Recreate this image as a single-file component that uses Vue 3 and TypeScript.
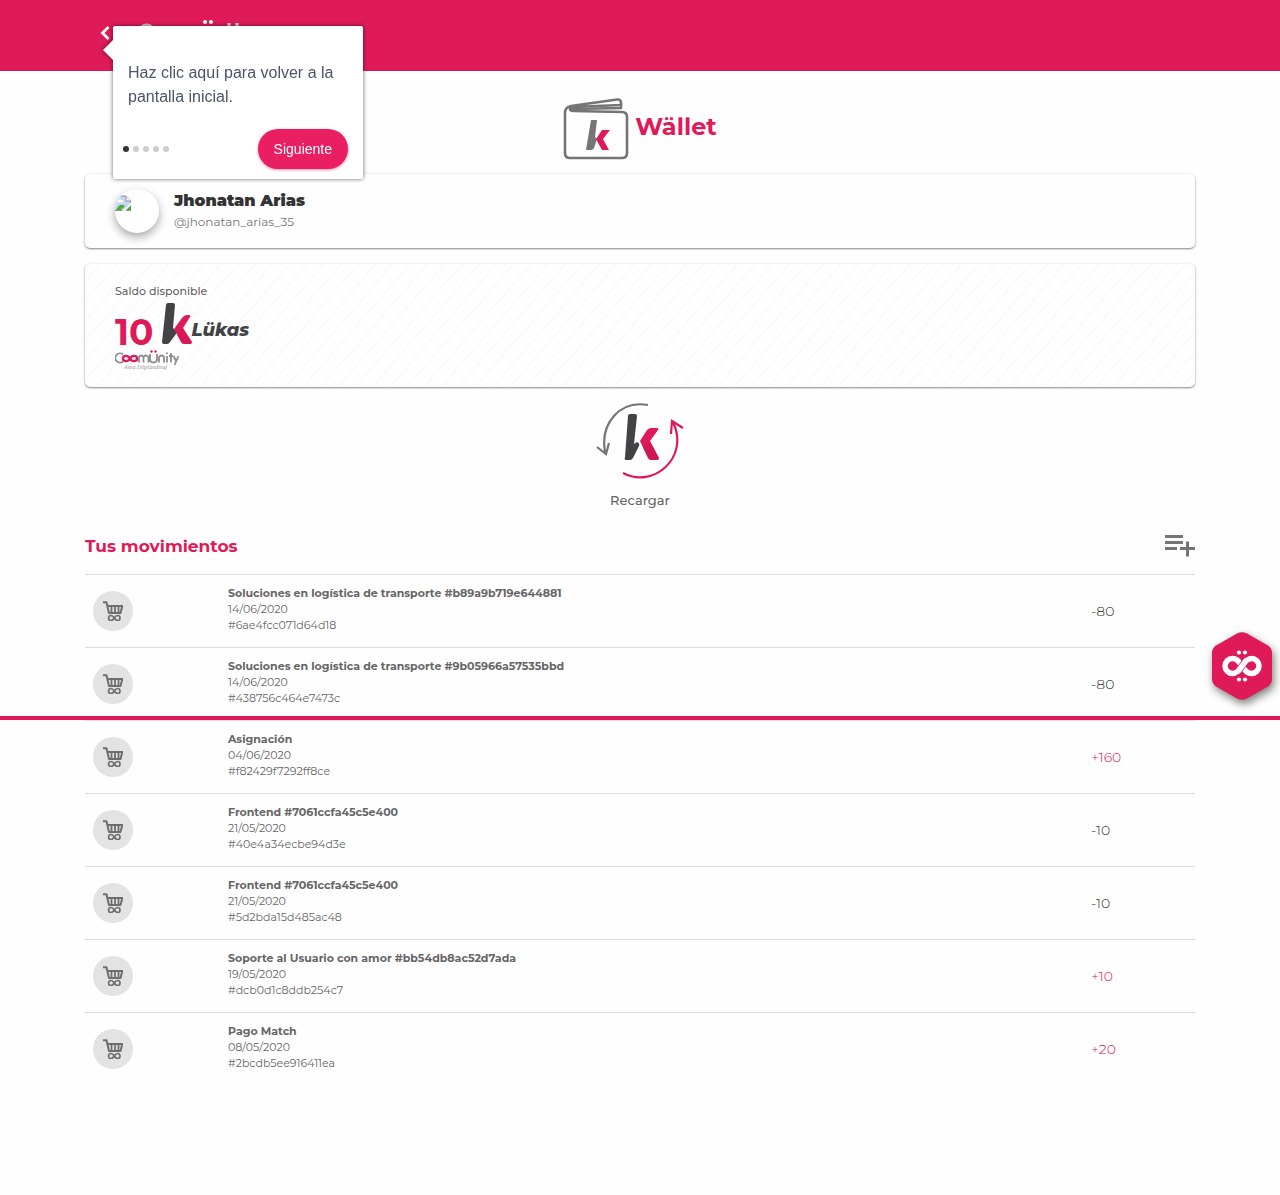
<script setup lang="ts">
import { ref } from 'vue'

interface Movement {
  title: string
  date: string
  code: string
  amount: number
}

const movements: Movement[] = [
  { title: 'Soluciones en logística de transporte #b89a9b719e644881', date: '14/06/2020', code: '#6ae4fcc071d64d18', amount: -80 },
  { title: 'Soluciones en logística de transporte #9b05966a57535bbd', date: '14/06/2020', code: '#438756c464e7473c', amount: -80 },
  { title: 'Asignación', date: '04/06/2020', code: '#f82429f7292ff8ce', amount: 160 },
  { title: 'Frontend #7061ccfa45c5e400', date: '21/05/2020', code: '#40e4a34ecbe94d3e', amount: -10 },
  { title: 'Frontend #7061ccfa45c5e400', date: '21/05/2020', code: '#5d2bda15d485ac48', amount: -10 },
  { title: 'Soporte al Usuario con amor #bb54db8ac52d7ada', date: '19/05/2020', code: '#dcb0d1c8ddb254c7', amount: 10 },
  { title: 'Pago Match', date: '08/05/2020', code: '#2bcdb5ee916411ea', amount: 20 },
]

const steps = 5
const step = ref(0)

const next = (): void => {
  step.value = (step.value + 1) % steps
}

const signed = (n: number): string => (n > 0 ? `+${n}` : `${n}`)
</script>

<template>
  <div class="page">
    <header class="topbar">
      <div class="container topbar-inner">
        <a href="#" class="back" aria-label="Volver">
          <svg width="10" height="16" viewBox="0 0 10 16"><path d="M8.500 2 2.500 8l6 6" fill="none" stroke="#fff" stroke-width="2.800" /></svg>
        </a>
        <svg class="brand" width="110" height="32" viewBox="0 0 110 32" aria-hidden="true">
          <path d="M18 10a8 8 0 1 0 0 12" fill="none" stroke="#d9c3ca" stroke-width="3" />
          <g fill="none" stroke="#fff" stroke-width="3">
            <circle cx="27" cy="17" r="6" /><circle cx="40" cy="17" r="6" />
            <path d="M50 24V14q4-5 8 0v10m0-10q4-5 8 0v10M70 10v9q4 8 11 0v-9M86 24V10" />
          </g>
          <path d="M95 6v18M103 6v18" fill="none" stroke="#e0c9d0" stroke-width="3.500" />
          <g fill="#fff"><circle cx="71" cy="5" r="2" /><circle cx="77" cy="5" r="2" /></g>
        </svg>

        <div class="tour" role="dialog" aria-label="Guía">
          <p class="tour-text">Haz clic aquí para volver a la pantalla inicial.</p>
          <div class="tour-foot">
            <div class="dots">
              <span v-for="n in steps" :key="n" class="dot" :class="{ on: n - 1 === step }"></span>
            </div>
            <button type="button" class="next" @click="next">Siguiente</button>
          </div>
        </div>
      </div>
    </header>

    <main class="container main">
      <h1 class="wallet">
        <svg width="66" height="62" viewBox="0 0 66 62" aria-hidden="true">
          <g fill="none" stroke="#757575" stroke-width="2.600" stroke-linejoin="round" stroke-linecap="round">
            <path d="M2 14v41q0 5 5 5h52q5 0 5-5V19q0-5-5-5L10 13q-3 0-3-2t3-2l48-2v-2q0-4-4-3.500L8 8q-6 1-6 7" />
            <path d="M8 11 58 10V6" />
          </g>
          <path d="M28 22h6l-2 17 2 2-3 9q-1 2-3 2h-5z" fill="#757575" />
          <path d="M39 32h8l-7 9 6 11h-7l-6-11z" fill="#de1a59" />
        </svg>
        <span>Wället</span>
      </h1>

      <section class="card profile">
        <div class="avatar">
          <svg width="16" height="16" viewBox="0 0 16 16" aria-hidden="true">
            <path d="M0 1h11l5 5v2L8 16H0z" fill="#c3d7f7" />
            <path d="M4 1h7l5 5v2" fill="none" stroke="#8f8f8f" />
            <path d="M11 1v5h5" fill="#fff" stroke="#8f8f8f" />
            <ellipse cx="5" cy="6" rx="3" ry="1.500" fill="#fff" />
            <path d="M1 15q4-8 9-4l-4 4zM11 15l5-5v5z" fill="#55a832" />
            <path d="M0 15.500h7M11 15.500h5" stroke="#8f8f8f" />
          </svg>
        </div>
        <div>
          <div class="name">Jhonatan Arias</div>
          <div class="handle">@jhonatan_arias_35</div>
        </div>
      </section>

      <section class="card balance">
        <div class="label">Saldo disponible</div>
        <div class="amount-row">
          <span class="total">10</span>
          <svg width="30" height="41" viewBox="0 0 30 41" aria-hidden="true">
            <path d="M6 0h5q2 0 2 2l-2 23 3 3q1 1 0 3L8 39q-1 2-3 2H2q-2 0-2-2L4 2q0-2 2-2z" fill="#434346" />
            <path d="M12 26 20 15q2-3 5-3h2q2 0 1 2L21 25l9 14q0 2-2 2h-6q-2 0-3-2z" fill="#de1a59" />
            <path d="m15 31 6-6 9 14q0 2-2 2h-6q-2 0-3-2z" fill="#c4164e" fill-opacity=".3" />
          </svg>
          <span class="currency">Lükas</span>
        </div>
        <svg class="mini-brand" width="64" height="22" viewBox="0 0 64 22" role="img" aria-label="Coomünity">
          <path d="M8 4.500A4.600 4.600 0 1 0 8 11.500" fill="none" stroke="#8d8d8d" stroke-width="1.800" />
          <path d="M15 8.500c-2-3.500-7-3.500-7 0s5 3.500 7 0 7-3.500 7 0-5 3.500-7 0" fill="none" stroke="#de1a59" stroke-width="2.400" />
          <path d="M24 12.500V7q2-3 4.500 0v5.500m0-5.500q2-3 5 0v5.500M35 4v5q0 3.500 3.500 3.500T42 9V4M44 12.500V7q3-3 5 0v5.500M52 6v6.500M52 2.500v1.500M56 3v9.500M54 6h4M58.500 6l2.500 5M63.500 6l-4 9" fill="none" stroke="#8d8d8d" stroke-width="1.800" />
          <g fill="#de1a59"><circle cx="36.500" cy="1.500" r="1.200" /><circle cx="40.500" cy="1.500" r="1.200" /></g>
          <text x="9" y="19" class="tagline">Área Döplandinaj</text>
        </svg>
      </section>

      <button type="button" class="recharge">
        <svg width="88" height="76" viewBox="0 0 88 76" aria-hidden="true">
          <path d="M52 2C24-3 4 20 9 49M1 44l9 7 3-11" fill="none" stroke="#757575" stroke-width="2.200" />
          <path d="M27 70C57 86 94 55 77 19M75 31l1-13 11 7" fill="none" stroke="#de1a59" stroke-width="2.200" />
          <path d="M34 11h5q2 0 2 2l-3 28 3-2q3 1 2 4l-6 12q-1 2-3 2h-4q-2 0-1-3l3-41q0-2 2-2z" fill="#434346" />
          <path d="M44 38 51 27q2-2 4-2h6q2 0 1 2l-8 11 9 17q0 2-2 2h-6q-2 0-3-2z" fill="#de1a59" />
          <path d="m47 45 7-7 9 17q0 2-2 2h-6q-2 0-3-2z" fill="#b8174c" fill-opacity=".4" />
        </svg>
        <span>Recargar</span>
      </button>

      <div class="section-head">
        <h2>Tus movimientos</h2>
        <button type="button" class="add" aria-label="Agregar">
          <svg width="30" height="22" viewBox="0 0 30 22"><path d="M0 1.500h18M0 7.500h18M0 13.500h12M15 13.500h15M22.500 6.500v15" fill="none" stroke="#757575" stroke-width="3" /></svg>
        </button>
      </div>

      <table class="moves">
        <tbody>
          <tr v-for="m in movements" :key="m.code">
            <td class="icon-cell">
              <span class="badge">
                <svg width="20" height="20" viewBox="0 0 20 20" aria-hidden="true">
                  <path d="M0 1.200h3.500L6 12h11.500L19.300 5H4.500" fill="none" stroke="#6e6e6e" stroke-width="2" stroke-linejoin="round" />
                  <path d="M8.500 5v7M12 5v7M15.500 5v7" stroke="#6e6e6e" stroke-width="1.800" />
                  <path d="M11.300 17c-2-3.500-5.700-3.200-5.700 0s3.700 3.500 5.700 0 5.700-3.200 5.700 0-3.700 3.500-5.700 0" fill="none" stroke="#6e6e6e" stroke-width="1.700" />
                </svg>
              </span>
            </td>
            <td class="info">
              <strong>{{ m.title }}</strong>
              <div>{{ m.date }}</div>
              <div>{{ m.code }}</div>
            </td>
            <td class="value" :class="{ plus: m.amount > 0 }">{{ signed(m.amount) }}</td>
          </tr>
        </tbody>
      </table>
    </main>

    <div class="rule"></div>
    <button type="button" class="fab" aria-label="Menú">
      <svg width="62" height="68" viewBox="0 0 62 68">
        <path d="M26 1.500q5-2.500 10 0l21 12q4 2.500 4 7.500v26q0 5-4 7.500l-21 12q-5 2.500-10 0l-21-12q-4-2.500-4-7.500V21q0-5 4-7.500z" fill="#de1a59" />
        <path d="M31 34c-4 6-6.500 7.500-9.500 7.500a7.500 7.500 0 0 1 0-15c3.500 0 5.500 1.500 9.500 7.500s6 7.500 9.500 7.500a7.500 7.500 0 0 0 0-15c-3 0-5.500 1.500-9.500 7.500" fill="none" stroke="#fff" stroke-width="5.500" />
        <path d="m27 39.500 8-11" stroke="#de1a59" stroke-width="7" />
        <path d="m26.500 40 9-12" stroke="#fff" stroke-width="5.500" />
        <g fill="#fff"><circle cx="28" cy="20.500" r="2.100" /><circle cx="34" cy="20.500" r="2.100" /><circle cx="28" cy="47.500" r="2.100" /><circle cx="34" cy="47.500" r="2.100" /></g>
      </svg>
    </button>
  </div>
</template>

<style>
body {
  margin: 0;
  background: #fefefe;
}
</style>

<style scoped>
.page {
  position: relative;
  padding-bottom: 110px;
  font-family: Montserrat, Inter, "Open Sans", sans-serif;
  color: #666;
}
button {
  padding: 0;
  border: 0;
  background: none;
  font-family: inherit;
  color: inherit;
  cursor: pointer;
}
svg {
  display: block;
  flex: none;
}
.container {
  box-sizing: border-box;
  max-width: 1140px;
  margin: 0 auto;
  padding: 0 15px;
}
.topbar {
  height: 71px;
  background: #de1a59;
}
.topbar-inner {
  position: relative;
  display: flex;
  gap: 24px;
  padding: 17px 30px 0;
}
.back {
  padding-top: 8px;
}
.tour {
  position: absolute;
  top: 26px;
  left: 43px;
  z-index: 2;
  box-sizing: border-box;
  width: 250px;
  padding: 35px 15px 10px;
  border-radius: 2px;
  background: #fff;
  filter: drop-shadow(0 0 2px rgba(0, 0, 0, 0.6));
  font-family: "Helvetica Neue", Helvetica, "Liberation Sans", sans-serif;
}
.tour::before {
  content: "";
  position: absolute;
  top: 14px;
  left: -10px;
  border: 10px solid transparent;
  border-left: 0;
  border-right-color: #fff;
}
.tour-text {
  margin: 0 0 20px;
  font-size: 16px;
  font-weight: 300;
  line-height: 24px;
  color: #4a5568;
}
.tour-foot {
  display: flex;
  align-items: center;
  justify-content: space-between;
  margin-left: -5px;
}
.dots {
  display: flex;
  gap: 4px;
}
.dot {
  width: 6px;
  height: 6px;
  border-radius: 50%;
  background: #ccc;
}
.dot.on {
  background: #333;
}
.next {
  height: 40px;
  padding: 0 16px;
  border-radius: 20px;
  background: #e91e63;
  box-shadow: 0 1px 3px rgba(233, 30, 99, 0.5);
  font-size: 14px;
  color: #fff;
}
.main {
  display: flex;
  flex-direction: column;
}
.wallet {
  display: flex;
  align-items: center;
  justify-content: center;
  gap: 6px;
  margin: 27px 0 14px;
  font-size: 24px;
  font-weight: 700;
  line-height: 28px;
  color: #de1a59;
}
.wallet span {
  padding-bottom: 4px;
}
.card {
  box-sizing: border-box;
  margin-bottom: 16px;
  padding: 15px 30px;
  border-radius: 5px;
  background-color: #fefefe;
  box-shadow: 0 1px 2px rgba(0, 0, 0, 0.45), 0 0 4px rgba(0, 0, 0, 0.06);
}
.profile {
  display: flex;
  gap: 15px;
}
.avatar {
  box-sizing: border-box;
  width: 44px;
  height: 44px;
  padding-top: 6px;
  overflow: hidden;
  border-radius: 50%;
  background: #fff;
  box-shadow: 0 4px 10px rgba(0, 0, 0, 0.35);
}
.name {
  font-size: 16px;
  font-weight: 900;
  line-height: 24px;
  color: #333;
}
.handle {
  font-size: 12px;
  font-weight: 400;
  line-height: 18px;
  color: #757575;
}
.balance {
  padding-top: 18px;
  background-image: repeating-linear-gradient(131deg, transparent 0 10px, #fafafa 11px 12px, transparent 13px);
}
.label {
  font-size: 11px;
  font-weight: 500;
  line-height: 18px;
}
.amount-row {
  display: flex;
  align-items: center;
  height: 46px;
}
.total {
  margin: 18px 8px 0 0;
  font-size: 36px;
  font-weight: 700;
  line-height: 40px;
  color: #de1a59;
}
.currency {
  margin-top: 14px;
  font-size: 18px;
  font-weight: 800;
  font-style: italic;
  color: #434346;
}
.mini-brand {
  margin-top: 4px;
}
.tagline {
  font-family: "Liberation Serif", serif;
  font-size: 6px;
  font-style: italic;
  fill: #999;
}
.recharge {
  display: flex;
  flex-direction: column;
  align-items: center;
  align-self: center;
  gap: 12px;
  font-size: 13px;
  font-weight: 500;
  line-height: 18px;
}
.section-head {
  display: flex;
  align-items: center;
  justify-content: space-between;
  margin: 25px 0 16px;
}
h2 {
  margin: 0;
  font-size: 17px;
  font-weight: 700;
  line-height: 24px;
  color: #de1a59;
}
.moves {
  width: 100%;
  border-collapse: separate;
  border-spacing: 0;
  table-layout: fixed;
}
td {
  padding: 10px 8px 14px;
  border-top: 1px solid #dcdcdc;
  font-size: 11px;
  line-height: 16px;
}
.icon-cell {
  width: 119px;
  padding: 0 8px;
}
.badge {
  display: flex;
  align-items: center;
  justify-content: center;
  width: 40px;
  height: 40px;
  border-radius: 50%;
  background: #e3e3e3;
}
.info strong {
  display: block;
  font-weight: 700;
}
.value {
  width: 96px;
  padding: 0 8px;
  font-size: 14px;
  font-weight: 300;
  color: #333;
}
.value.plus {
  color: #de1a59;
}
.rule {
  position: absolute;
  top: 716px;
  left: 0;
  right: 0;
  height: 4px;
  background: #de1a59;
}
.fab {
  position: absolute;
  top: 632px;
  right: 7px;
  filter: drop-shadow(2px 4px 4px rgba(0, 0, 0, 0.5));
}
</style>
